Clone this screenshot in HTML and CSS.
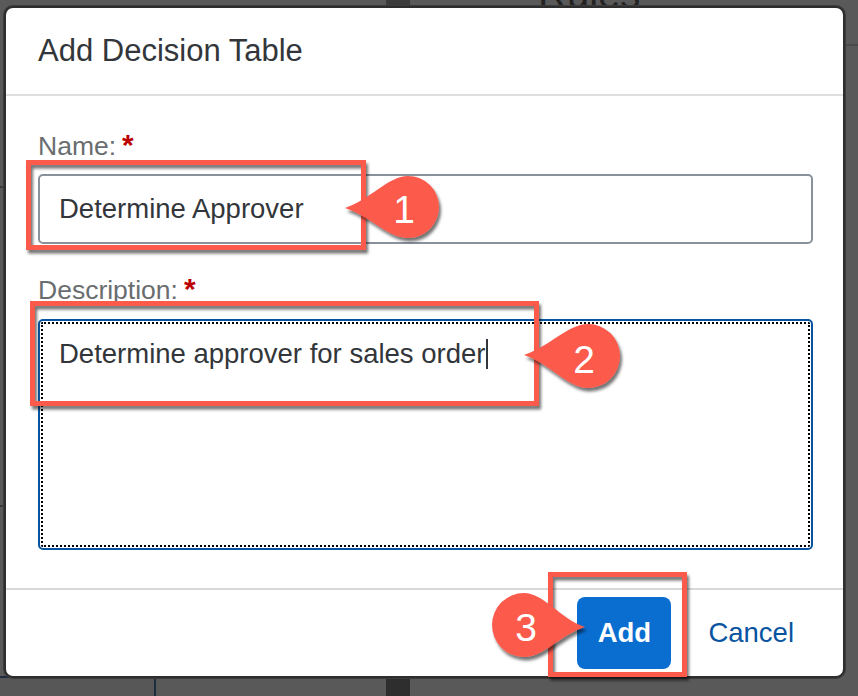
FILE: index.html
```html
<!DOCTYPE html>
<html lang="en">
<head>
<meta charset="utf-8">
<title>Add Decision Table</title>
<link rel="stylesheet" href="styles.css">
</head>
<body>
<div class="page">
  <div class="backdrop">
    <div class="bg-rules">Rules</div>
    <div class="bg-block bg-block-top"></div>
    <div class="bg-block bg-block-bottom"></div>
    <div class="bg-tile"></div>
    <div class="bg-line bg-line-r"></div>
    <div class="bg-line bg-line-l1"></div>
    <div class="bg-line bg-line-l2"></div>
  </div>

  <div class="dialog">
    <header class="dialog-header">
      <h1 class="dialog-title">Add Decision Table</h1>
    </header>
    <div class="dialog-content">
      <label class="field-label">Name:<span class="req">*</span></label>
      <div class="input">Determine Approver</div>
      <label class="field-label gap">Description:<span class="req">*</span></label>
      <div class="textarea">Determine approver for sales order<span class="caret"></span></div>
    </div>
    <footer class="dialog-footer">
      <button class="btn btn-primary">Add</button>
      <button class="btn btn-link">Cancel</button>
    </footer>
  </div>

  <svg class="annotations" width="858" height="696" viewBox="0 0 858 696">
    <defs>
      <filter id="shadow" x="-20%" y="-20%" width="140%" height="140%">
        <feDropShadow dx="2" dy="3.5" stdDeviation="1.4" flood-color="#000" flood-opacity="0.55"/>
      </filter>
    </defs>
    <g class="marks" filter="url(#shadow)">
      <rect x="28.5" y="162.5" width="335" height="85" />
      <rect x="32.5" y="303.5" width="504" height="100" />
      <rect x="550.5" y="574.5" width="134" height="100" />
    </g>
    <g class="callouts" filter="url(#shadow)">
      <path d="M345,208 C370,200 388,176 408,176 A31,31 0 1 1 408,238 C388,238 370,216 345,208 Z"/>
      <path d="M524,355 C549,347 568,324 588,324 A32,32 0 1 1 588,388 C568,388 549,363 524,355 Z"/>
      <path d="M585,627 C560,619 544,593 524,593 A32,32 0 1 0 524,657 C544,657 560,635 585,627 Z"/>
    </g>
    <g class="callout-num">
      <text x="404" y="223">1</text>
      <text x="584" y="373">2</text>
      <text x="526" y="641">3</text>
    </g>
  </svg>
</div>
</body>
</html>
```

FILE: styles.css
```css
html, body {
  margin: 0;
  padding: 0;
}

body {
  font-family: "Liberation Sans", Arial, sans-serif;
  background: #595959;
}

.page {
  position: relative;
  width: 858px;
  height: 696px;
  overflow: hidden;
  background: #595959;
}

/* dimmed page behind the dialog */
.backdrop {
  position: absolute;
  inset: 0;
}

.bg-rules {
  position: absolute;
  left: 538px;
  top: -28px;
  font-size: 40px;
  color: #222;
}

.bg-block {
  position: absolute;
  left: 386px;
  width: 24px;
}

.bg-block-top {
  top: 0;
  height: 8px;
  background: #3b3b3b;
}

.bg-block-bottom {
  bottom: 0;
  height: 20px;
  background: #2e2e2e;
}

.bg-tile {
  position: absolute;
  left: 0;
  bottom: 0;
  width: 154px;
  height: 18px;
  background: #575757;
  border-top: 2px solid #1e2c40;
  border-right: 2px solid #1e2c40;
}

.bg-line {
  position: absolute;
  height: 2px;
  background: #3a3a3a;
}

.bg-line-r {
  left: 846px;
  right: 0;
  top: 44px;
  background: #4a4a4a;
}

.bg-line-l1 {
  left: 0;
  width: 6px;
  top: 186px;
}

.bg-line-l2 {
  left: 0;
  width: 6px;
  top: 505px;
}

/* dialog */
.dialog {
  position: absolute;
  left: 4px;
  top: 6px;
  width: 841px;
  height: 672px;
  box-sizing: border-box;
  border: 2px solid #2e2e2e;
  border-radius: 9px;
  background: #fff;
  box-shadow: 0 0 0 1px #3c3c3c;
  display: flex;
  flex-direction: column;
}

.dialog-header {
  flex: none;
  height: 86px;
  display: flex;
  align-items: center;
  padding-left: 32px;
  border-bottom: 2px solid #dedede;
}

.dialog-title {
  margin: 0;
  font-size: 31px;
  font-weight: normal;
  color: #32363a;
}

.dialog-content {
  flex: 1;
  padding: 33px 30px 0 32px;
  display: flex;
  flex-direction: column;
}

.field-label {
  display: block;
  font-size: 26.5px;
  line-height: 32px;
  color: #6a6d70;
}

.field-label.gap {
  margin-top: 29px;
}

.req {
  color: #bb0000;
  font-weight: bold;
  font-size: 30px;
  margin-left: 6px;
}

.input {
  margin-top: 12px;
  height: 70px;
  box-sizing: border-box;
  border: 2px solid #89919a;
  border-radius: 5px;
  padding-left: 19px;
  display: flex;
  align-items: center;
  font-size: 27.5px;
  color: #32363a;
}

.textarea {
  margin-top: 13px;
  height: 231px;
  box-sizing: border-box;
  border: 2px solid #0854a0;
  border-radius: 5px;
  padding: 16px 19px;
  font-size: 27.5px;
  line-height: 34px;
  color: #32363a;
  outline: 2px dotted #000;
  outline-offset: -5px;
}

.caret {
  display: inline-block;
  width: 2px;
  height: 30px;
  margin-left: 1px;
  vertical-align: -6px;
  background: #32363a;
}

.dialog-footer {
  flex: none;
  height: 86px;
  border-top: 2px solid #d9d9d9;
  display: flex;
  align-items: center;
  justify-content: flex-end;
  gap: 21px;
  padding-right: 33px;
}

.btn {
  font-family: inherit;
  font-size: 27.5px;
  border: none;
  background: none;
  margin: 0;
  cursor: pointer;
}

.btn-primary {
  width: 94px;
  height: 72px;
  padding: 0;
  border-radius: 8px;
  background: #0a6ed1;
  color: #fff;
  font-weight: bold;
}

.btn-link {
  height: 72px;
  padding: 0 16px;
  color: #0854a0;
}

/* screenshot annotations */
.annotations {
  position: absolute;
  left: 0;
  top: 0;
  pointer-events: none;
}

.marks rect {
  fill: none;
  stroke: #fc5a4c;
  stroke-width: 5;
}

.callouts path {
  fill: #fc5a4c;
}

.callout-num text {
  fill: #fff;
  font-family: "Liberation Sans", Arial, sans-serif;
  font-size: 39px;
  text-anchor: middle;
}
```
